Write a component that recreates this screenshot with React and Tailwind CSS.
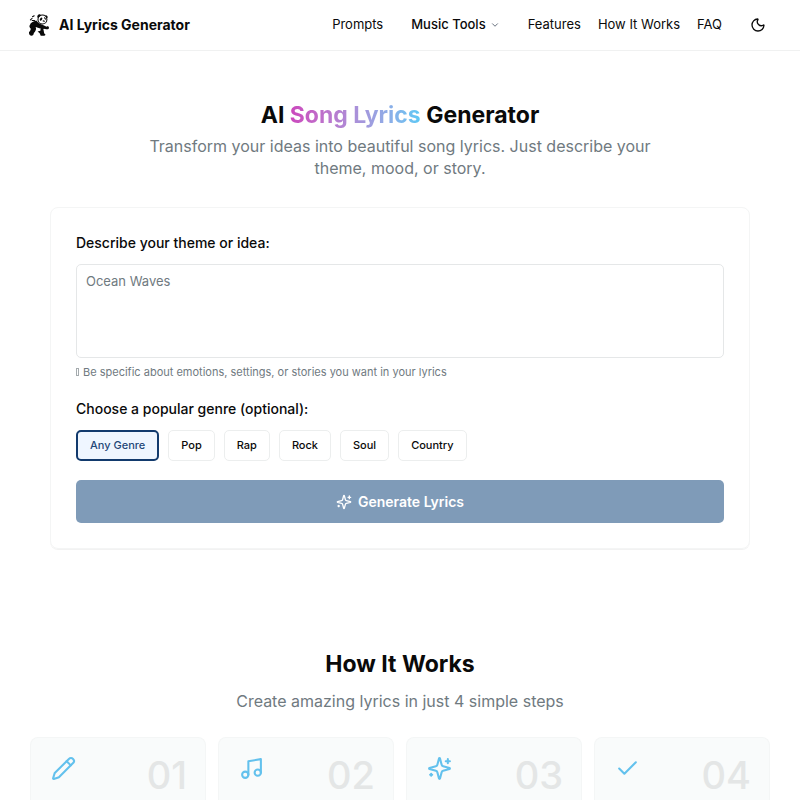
import React, { useState } from "react";
import { ChevronDown, Moon } from "lucide-react";

const genres = ["Any Genre", "Pop", "Rap", "Rock", "Soul", "Country"];

const Icon = ({ size = 25, children }) => (
  <svg
    width={size}
    height={size}
    viewBox="0 0 24 24"
    fill="none"
    stroke="currentColor"
    strokeWidth="2"
    strokeLinecap="round"
    strokeLinejoin="round"
    aria-hidden="true"
  >
    {children}
  </svg>
);

const SparklesIcon = ({ size }) => (
  <Icon size={size}>
    <path d="M9.937 15.5A2 2 0 0 0 8.5 14.063l-6.135-1.582a.5.5 0 0 1 0-.962L8.5 9.936A2 2 0 0 0 9.937 8.5l1.582-6.135a.5.5 0 0 1 .963 0L14.063 8.5A2 2 0 0 0 15.5 9.937l6.135 1.581a.5.5 0 0 1 0 .964L15.5 14.063a2 2 0 0 0-1.437 1.437l-1.582 6.135a.5.5 0 0 1-.963 0z" />
    <path d="M20 3v4M22 5h-4M4 17v2M5 18H3" />
  </Icon>
);

const PencilIcon = () => (
  <Icon>
    <path d="M21.174 6.812a1 1 0 0 0-3.986-3.987L3.842 16.174a2 2 0 0 0-.5.83l-1.321 4.352a.5.5 0 0 0 .623.622l4.353-1.32a2 2 0 0 0 .83-.497z" />
    <path d="m15 5 4 4" />
  </Icon>
);

const MusicIcon = () => (
  <Icon>
    <path d="M9 18V5l12-2v13" />
    <circle cx="6" cy="18" r="3" />
    <circle cx="18" cy="16" r="3" />
  </Icon>
);

const CheckIcon = () => (
  <Icon>
    <path d="M20 6 9 17l-5-5" />
  </Icon>
);

const steps = [
  { number: "01", icon: <PencilIcon /> },
  { number: "02", icon: <MusicIcon /> },
  { number: "03", icon: <SparklesIcon /> },
  { number: "04", icon: <CheckIcon /> }
];

function PandaLogo() {
  return (
    <svg width="20" height="22" viewBox="0 0 58 64" aria-hidden="true">
      {/* head */}
      <circle cx="39" cy="16" r="13" fill="#fff" stroke="#0a0a0a" strokeWidth="3" />
      <path d="M24 10c-1-6 3-10 8-9l3 3-8 7z" fill="#0a0a0a" />
      <path d="M47 4c4-2 8 2 7 7l-3 2z" fill="#0a0a0a" />
      <ellipse cx="35" cy="15" rx="3" ry="5" fill="#0a0a0a" transform="rotate(35 35 15)" />
      <path d="M45 11l3 4M41 20l4 1" stroke="#0a0a0a" strokeWidth="3" strokeLinecap="round" />
      {/* shoulders and arms */}
      <path d="M5 27c6-4 10-7 16-8 4 5 9 10 18 12l12 6c3-3 7-1 7 3s-4 5-8 4l-7-1-4 5-11-4-9-6-10 5c-5 0-8-4-8-8z" fill="#0a0a0a" />
      {/* belly and legs */}
      <path d="M19 38l16 5-3 9H18z" fill="#fff" />
      <path d="M3 35l16 3c3 5 1 12-5 17 0 4-3 8-7 8-5-1-8-5-7-11 4-3 5-6 5-10z" fill="#0a0a0a" />
      <path d="M34 43l8 2 2 11 4 4c-1 3-4 3-14 3l-3-7-6-5 8-2z" fill="#0a0a0a" />
      {/* drifting notes */}
      <path d="M4 17l5-4M10 8l5-3M9 19l7 0" stroke="#0a0a0a" strokeWidth="3" strokeLinecap="round" />
    </svg>
  );
}

function Header() {
  return (
    <header className="flex items-center justify-between h-[51px] pl-[29px] pr-[34px] border-b border-[#f0f1f1]">
      <a href="#" className="flex items-center gap-2.5 text-sm font-bold">
        <PandaLogo />
        <span>AI Lyrics Generator</span>
      </a>
      <nav className="flex items-center text-[13px]">
        <a href="#prompts">Prompts</a>
        <button className="flex items-center gap-1 mx-7 font-medium">
          Music Tools
          <ChevronDown size={10} className="text-gray-600" />
        </button>
        <div className="flex items-center gap-[17px]">
          <a href="#features">Features</a>
          <a href="#how-it-works">How It Works</a>
          <a href="#faq">FAQ</a>
        </div>
        <button aria-label="Toggle theme" className="ml-7">
          <Moon size={16} />
        </button>
      </nav>
    </header>
  );
}

function LyricsForm() {
  const [idea, setIdea] = useState("");
  const [genre, setGenre] = useState("Any Genre");

  return (
    <form
      onSubmit={(e) => e.preventDefault()}
      className="w-full max-w-[700px] mx-auto p-[25px] rounded-lg border border-[#f4f5f5] shadow-2xs"
    >
      <label htmlFor="idea" className="block text-sm leading-5 font-medium">
        Describe your theme or idea:
      </label>
      <textarea
        id="idea"
        value={idea}
        onChange={(e) => setIdea(e.target.value)}
        placeholder="Ocean Waves"
        className="block w-full h-[94px] mt-[11px] px-[9px] py-1.5 text-[13px] leading-5 rounded-[5px] border border-[#e5e7e8] resize-none outline-none placeholder:text-[#707a7f]"
      />
      <p className="flex items-center mt-1.5 gap-1 text-[11px] leading-4 text-[#707a7f]">
        <span className="w-[3px] h-2 border border-[#a5abae]" />
        Be specific about emotions, settings, or stories you want in your lyrics
      </p>

      <h3 className="mt-[19px] text-sm leading-5 font-medium">Choose a popular genre (optional):</h3>
      <div className="flex flex-wrap gap-[9px] mt-[11px]">
        {genres.map((name) => (
          <button
            key={name}
            type="button"
            onClick={() => setGenre(name)}
            className={`h-[31px] text-[11px] font-medium rounded-[5px] ${
              genre === name
                ? "px-3 border-2 border-[#123a6d] bg-[#eff6ff] text-[#1f4878]"
                : "px-3 border border-[#eceeee]"
            }`}
          >
            {name}
          </button>
        ))}
      </div>

      <button
        type="submit"
        className="flex items-center justify-center gap-1.5 w-full h-[43px] mt-[19px] text-sm font-semibold text-white bg-[#7f9bb8] rounded-[5px]"
      >
        <SparklesIcon size={16} />
        Generate Lyrics
      </button>
    </form>
  );
}

function HowItWorks() {
  return (
    <section id="how-it-works" className="flex flex-col flex-1 mt-[99px] px-[30px]">
      <h2 className="text-[23px] leading-8 font-bold text-center">How It Works</h2>
      <p className="mt-2.5 text-base leading-[22px] text-center text-[#707a7f]">
        Create amazing lyrics in just 4 simple steps
      </p>
      <div className="grid grid-cols-4 gap-3 flex-1 mt-[25px]">
        {steps.map((step) => (
          <div
            key={step.number}
            className="flex justify-between items-start pl-5 pr-[18px] pt-[18px] rounded-t-lg border border-b-0 border-[#f4f6f6] bg-[#f9fbfb]"
          >
            <span className="text-[#63c1ed]">{step.icon}</span>
            <span className="text-[38px] leading-[38px] font-medium text-[#e4e6e6]">{step.number}</span>
          </div>
        ))}
      </div>
    </section>
  );
}

export default function App() {
  return (
    <div className="flex flex-col min-h-screen bg-white text-[#0a0a0a] font-['Inter',sans-serif]">
      <Header />
      <main className="flex flex-col flex-1">
        <section className="px-5 pt-12">
          <h1 className="text-[23px] leading-8 font-bold text-center">
            AI{" "}
            <span className="bg-linear-to-r from-[#cb47bd] to-[#5ac8f5] bg-clip-text text-transparent">
              Song Lyrics
            </span>{" "}
            Generator
          </h1>
          <p className="max-w-[520px] mx-auto mt-1 mb-7 text-base leading-[22px] text-center text-[#707a7f]">
            Transform your ideas into beautiful song lyrics. Just describe your theme, mood, or story.
          </p>
          <LyricsForm />
        </section>
        <HowItWorks />
      </main>
    </div>
  );
}
